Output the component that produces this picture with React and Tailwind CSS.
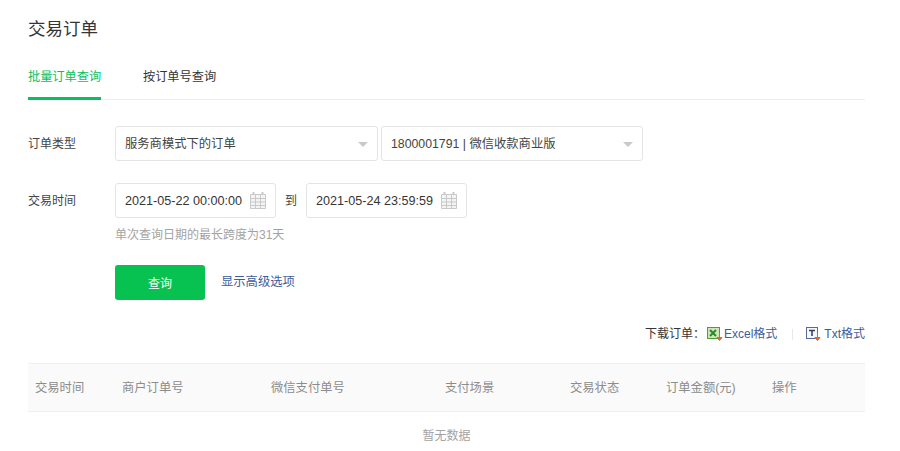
const FONT = "font-['Liberation_Sans','Noto_Sans_CJK_SC',sans-serif]";

const Caret = () => (
  <span className="w-0 h-0 border-x-[5.500px] border-x-transparent border-t-[5px] border-t-[#c9c9c9]" />
);

const CalendarIcon = () => (
  <svg width="16" height="17" viewBox="0 0 16 17" fill="none" stroke="#c9c9c9" strokeWidth="1">
    <path d="M.5 2.500h15v14H.5z" fill="#f4f4f4" />
    <path d="M.5 6.500h15M.5 10h15M.5 13.500h15M5.500 2.500v14M10.500 2.500v14" />
    <path d="M3.500 0v3M12.500 0v3" strokeWidth="2" />
  </svg>
);

const ExcelIcon = () => (
  <svg width="16" height="15" viewBox="0 0 16 15">
    <rect x=".5" y=".5" width="12" height="11" fill="#cfe6b8" stroke="#4f9a3a" />
    <path d="M3 3l6 6M9 3l-6 6" stroke="#2c8a2c" strokeWidth="2" />
    <path d="M12.500 6v5M10 10.500h5l-2.500 3z" stroke="#e8622a" fill="#e8622a" />
  </svg>
);

const TxtIcon = () => (
  <svg width="15" height="15" viewBox="0 0 15 15">
    <rect x=".5" y=".5" width="11" height="11" fill="#f6f7fb" stroke="#5a6a94" />
    <path d="M3 3.500h6M6 3.500v5.500" stroke="#333c55" strokeWidth="1.500" fill="none" />
    <path d="M11.500 6v5M9 10.500h5l-2.500 3z" stroke="#e8622a" fill="#e8622a" />
  </svg>
);

const Select = ({ value, width }) => (
  <div className={`${width} h-[35px] pl-[9px] pr-[9px] flex items-center justify-between bg-white border border-[#e4e4e4] rounded-[3px] text-[12.300px] text-[#444444]`}>
    <span className="mt-[2px]">{value}</span>
    <span className="flex mt-px"><Caret /></span>
  </div>
);

const DateInput = ({ value }) => (
  <div className="w-[161px] h-[35px] pl-[9px] pr-[9px] flex items-center justify-between bg-white border border-[#e4e4e4] rounded-[3px] text-[12.600px] text-[#353535]">
    <span className="mt-[2px] whitespace-nowrap">{value}</span>
    <CalendarIcon />
  </div>
);

const columns = ['交易时间', '商户订单号', '微信支付单号', '支付场景', '交易状态', '订单金额(元)', '操作'];

export default function App() {
  return (
    <div className={`${FONT} w-[900px] h-[451px] overflow-hidden bg-white pl-[28px] pr-[35px] pt-[18px]`}>
      <h1 className="text-[17.500px] leading-[22px] font-normal text-[#353535]">交易订单</h1>

      {/* Tabs */}
      <div className="mt-[24px] h-[36px] flex gap-[42px] border-b border-[#eeeeee] text-[12.200px]">
        <div className="w-[73px] h-[36px] border-b-[3px] border-[#07c160] text-[#07c160] leading-[27px] whitespace-nowrap">批量订单查询</div>
        <div className="text-[#353535] leading-[27px]">按订单号查询</div>
      </div>

      {/* Filters */}
      <div className="mt-[26px] flex items-center">
        <div className="w-[87px] text-[12px] text-[#444444]">订单类型</div>
        <div className="flex gap-[3px]">
          <Select value="服务商模式下的订单" width="w-[263px]" />
          <Select value="1800001791 | 微信收款商业版" width="w-[262px]" />
        </div>
      </div>

      <div className="mt-[22px] flex items-center">
        <div className="w-[87px] text-[12px] text-[#444444]">交易时间</div>
        <DateInput value="2021-05-22 00:00:00" />
        <span className="w-[30px] text-center text-[12px] text-[#444444]">到</span>
        <DateInput value="2021-05-24 23:59:59" />
      </div>

      <div className="mt-[9px] ml-[87px] h-[16px] leading-[16px] text-[12px] text-[#a3a3a3]">单次查询日期的最长跨度为31天</div>

      <div className="mt-[22px] ml-[87px] flex items-center gap-[16px]">
        <button className="w-[90px] h-[35px] pt-[2px] bg-[#07c150] rounded-[3px] text-white text-[12px]">查询</button>
        <a className="text-[12.300px] text-[#3e5c9a]">显示高级选项</a>
      </div>

      {/* Download */}
      <div className="mt-[26px] h-[16px] flex justify-end items-center text-[12px]">
        <span className="text-[#353535] whitespace-nowrap mr-[2px]">下载订单：</span>
        <span className="flex"><ExcelIcon /></span>
        <span className="ml-[1px] text-[#3e5c9a]">Excel格式</span>
        <span className="ml-[15px] mr-[13px] w-px h-[11px] bg-[#e8e8e8]" />
        <TxtIcon />
        <span className="ml-[3px] text-[#3e5c9a]">Txt格式</span>
      </div>

      {/* Table */}
      <div className="mt-[21px] h-[49px] px-[7px] grid grid-cols-[87px_149px_174px_125px_96px_106px_1fr] items-center bg-[#fafafa] border-y border-[#f0f0f0] text-[12.300px] text-[#8c8c8c]">
        {columns.map((c) => (
          <div key={c} className="mt-[1px]">{c}</div>
        ))}
      </div>
      <div className="h-[48px] flex items-center justify-center text-[12px] text-[#a3a3a3]">暂无数据</div>
    </div>
  );
}
